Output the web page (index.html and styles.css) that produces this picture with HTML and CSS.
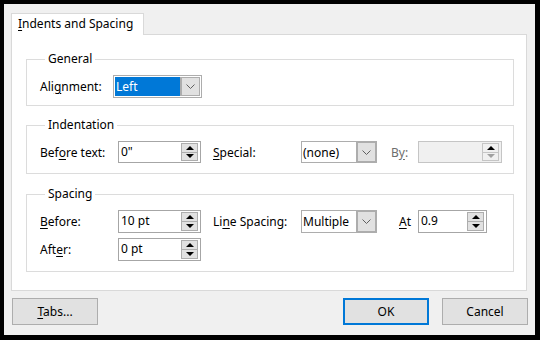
FILE: index.html
```
<!DOCTYPE html>
<html lang="en">
<head>
    <meta charset="UTF-8">
    <title>Paragraph</title>
    <link rel="stylesheet" href="styles.css">
</head>
<body>
    <div class="dialog">
        <div class="tabs">
            <div class="tab"><u>I</u>ndents and Spacing</div>
        </div>
        <div class="page">
            <fieldset class="group group-general">
                <legend>General</legend>
                <div class="row">
                    <span class="label">Ali<u>g</u>nment:</span>
                    <div class="combo combo-align">
                        <span class="combo-value selected">Left</span>
                        <span class="combo-btn">
                            <svg width="9" height="5" viewBox="0 0 9 5"><polyline points="0.5,0.5 4.5,4.5 8.5,0.5" fill="none" stroke="#606060" stroke-width="1"/></svg>
                        </span>
                    </div>
                </div>
            </fieldset>

            <fieldset class="group group-indent">
                <legend>Indentation</legend>
                <div class="row">
                    <span class="label">Bef<u>o</u>re text:</span>
                    <div class="spin">
                        <span class="spin-value">0"</span>
                        <span class="spin-btns">
                            <span class="spin-btn"><i class="arrow-up"></i></span>
                            <span class="spin-btn"><i class="arrow-down"></i></span>
                        </span>
                    </div>
                    <span class="label label-mid"><u>S</u>pecial:</span>
                    <div class="combo">
                        <span class="combo-value">(none)</span>
                        <span class="combo-btn">
                            <svg width="9" height="5" viewBox="0 0 9 5"><polyline points="0.5,0.5 4.5,4.5 8.5,0.5" fill="none" stroke="#606060" stroke-width="1"/></svg>
                        </span>
                    </div>
                    <span class="label label-by disabled">B<u>y</u>:</span>
                    <div class="spin spin-by disabled">
                        <span class="spin-value"></span>
                        <span class="spin-btns">
                            <span class="spin-btn"><i class="arrow-up"></i></span>
                            <span class="spin-btn"><i class="arrow-down grey"></i></span>
                        </span>
                    </div>
                </div>
            </fieldset>

            <fieldset class="group group-spacing">
                <legend>Spacing</legend>
                <div class="row">
                    <span class="label"><u>B</u>efore:</span>
                    <div class="spin">
                        <span class="spin-value">10 pt</span>
                        <span class="spin-btns">
                            <span class="spin-btn"><i class="arrow-up"></i></span>
                            <span class="spin-btn"><i class="arrow-down"></i></span>
                        </span>
                    </div>
                    <span class="label label-mid">Li<u>n</u>e Spacing:</span>
                    <div class="combo">
                        <span class="combo-value">Multiple</span>
                        <span class="combo-btn">
                            <svg width="9" height="5" viewBox="0 0 9 5"><polyline points="0.5,0.5 4.5,4.5 8.5,0.5" fill="none" stroke="#606060" stroke-width="1"/></svg>
                        </span>
                    </div>
                    <span class="label label-at"><u>A</u>t</span>
                    <div class="spin spin-at">
                        <span class="spin-value">0.9</span>
                        <span class="spin-btns">
                            <span class="spin-btn"><i class="arrow-up"></i></span>
                            <span class="spin-btn"><i class="arrow-down"></i></span>
                        </span>
                    </div>
                </div>
                <div class="row">
                    <span class="label">Aft<u>e</u>r:</span>
                    <div class="spin">
                        <span class="spin-value">0 pt</span>
                        <span class="spin-btns">
                            <span class="spin-btn"><i class="arrow-up"></i></span>
                            <span class="spin-btn"><i class="arrow-down"></i></span>
                        </span>
                    </div>
                </div>
            </fieldset>
        </div>

        <div class="footer">
            <button class="btn"><u>T</u>abs...</button>
            <div class="footer-right">
                <button class="btn btn-default">OK</button>
                <button class="btn">Cancel</button>
            </div>
        </div>
    </div>
</body>
</html>
```
FILE: styles.css
```
html, body {
    margin: 0;
}
body {
    width: 540px;
    height: 340px;
    box-sizing: border-box;
    padding: 4px 5px 5px 4px;
    background-color: #000;
    font-family: "Noto Sans", "Open Sans", sans-serif;
    font-size: 12px;
    color: #000;
}
u {
    text-decoration-thickness: 1px;
    text-underline-offset: 2px;
}
.dialog {
    width: 531px;
    height: 331px;
    box-sizing: border-box;
    background-color: #f0f0f0;
    padding: 9px 8px 0 7px;
}

/* tab strip */
.tabs {
    display: flex;
    height: 21px;
}
.tab {
    position: relative;
    z-index: 1;
    width: 133px;
    height: 22px;
    box-sizing: border-box;
    padding-left: 6px;
    line-height: 20px;
    background-color: #fff;
    border: 1px solid #d9d9d9;
    border-bottom: none;
}
.page {
    height: 257px;
    box-sizing: border-box;
    background-color: #fff;
    border: 1px solid #d9d9d9;
    padding: 16px 12px 0 14px;
}

/* group boxes */
.group {
    margin: 0;
    border: 1px solid #dcdcdc;
    padding: 0 0 0 13px;
    min-width: 0;
}
.group legend {
    padding: 0 3px;
    margin-left: 5px;
    line-height: 16px;
}
.group-general {
    padding-top: 8px;
    padding-bottom: 7px;
}
.group-indent {
    margin-top: 11px;
    padding-top: 8px;
    padding-bottom: 10px;
}
.group-indent .row {
    height: 22px;
}
.group-spacing {
    margin-top: 12px;
    padding-top: 8px;
    padding-bottom: 10px;
}
.group-spacing .row + .row {
    margin-top: 5px;
}

.row {
    display: flex;
    align-items: center;
    height: 23px;
}
.label {
    width: 78px;
    flex: none;
    white-space: nowrap;
}
.label-mid {
    width: 88px;
    margin-left: 12px;
}
.label-by {
    width: 27px;
    padding-left: 14px;
}
.label-at {
    width: 19px;
    padding-left: 22px;
}
.disabled {
    color: #6d6d6d;
}

/* combo boxes */
.combo {
    display: flex;
    width: 76px;
    height: 100%;
    box-sizing: border-box;
    border: 1px solid #adadad;
    background-color: #fff;
    flex: none;
}
.combo-value {
    flex: 1;
    padding-left: 1px;
    line-height: 21px;
    overflow: hidden;
    white-space: nowrap;
}
.combo-btn {
    width: 19px;
    display: flex;
    align-items: center;
    justify-content: center;
    background-color: #e1e1e1;
    border-left: 1px solid #adadad;
    box-shadow: inset 0 0 0 1px #adadad;
}
.combo-align {
    width: 89px;
    margin-left: -5px;
    padding: 1px;
}
.combo-align .combo-value {
    line-height: 19px;
}
.selected {
    background-color: #0078d7;
    color: #fff;
}

/* spin boxes */
.spin {
    display: flex;
    width: 83px;
    height: 100%;
    box-sizing: border-box;
    border: 1px solid #a6a6a6;
    background-color: #fff;
    flex: none;
}
.spin-value {
    flex: 1;
    padding-left: 2px;
    line-height: 20px;
}
.spin-btns {
    display: flex;
    flex-direction: column;
    width: 17px;
    margin: 1px 2px 1px 0;
}
.spin-btn {
    flex: 1;
    display: flex;
    align-items: center;
    justify-content: center;
    background-color: #e1e1e1;
    border: 1px solid #adadad;
}
.spin-btn + .spin-btn {
    border-top: none;
}
.arrow-up,
.arrow-down {
    width: 0;
    height: 0;
    border-left: 4px solid transparent;
    border-right: 4px solid transparent;
}
.arrow-up {
    border-bottom: 4px solid #000;
}
.arrow-down {
    border-top: 4px solid #000;
}
.arrow-down.grey {
    border-top-color: #a0a0a0;
}
.spin-by {
    width: 84px;
    background-color: #f0f0f0;
    border-color: #c5c5c5;
}
.spin-by .spin-btn {
    background-color: #f0f0f0;
    border-color: #c5c5c5;
}
.spin-at {
    width: 69px;
}

/* buttons */
.footer {
    display: flex;
    justify-content: space-between;
    margin-top: 7px;
    padding-left: 1px;
}
.footer-right {
    display: flex;
    gap: 13px;
    margin-right: -1px;
}
.btn {
    width: 86px;
    height: 27px;
    box-sizing: border-box;
    padding: 0;
    font-family: inherit;
    font-size: 12px;
    color: #000;
    background-color: #e1e1e1;
    border: 1px solid #adadad;
}
.btn-default {
    border: 2px solid #0078d7;
}
```
